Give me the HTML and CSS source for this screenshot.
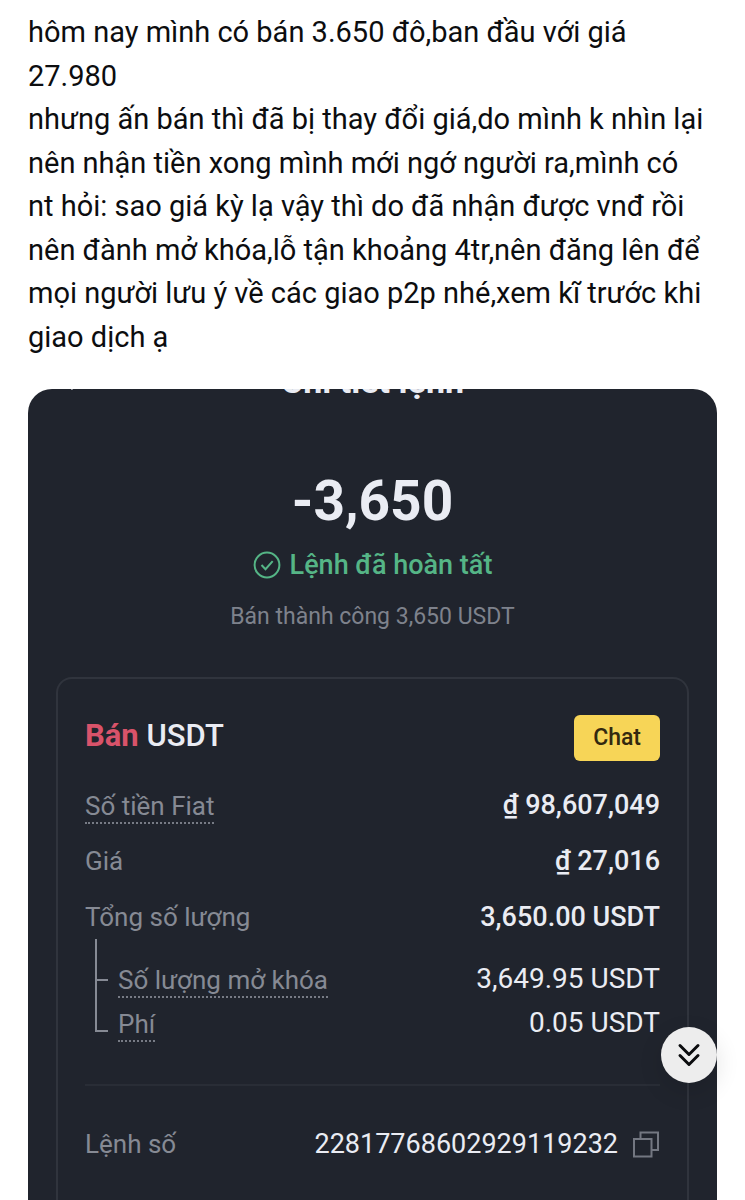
FILE: index.html
```html
<!DOCTYPE html>
<html lang="vi">
<head>
<meta charset="utf-8">
<meta name="viewport" content="width=device-width, initial-scale=1">
<title>Chi tiết lệnh</title>
<link rel="stylesheet" href="styles.css">
</head>
<body>
<main class="page">
  <p class="post">hôm nay mình có bán 3.650 đô,ban đầu với giá<br>27.980<br>nhưng ấn bán thì đã bị thay đổi giá,do mình k nhìn lại<br>nên nhận tiền xong mình mới ngớ người ra,mình có<br>nt hỏi: sao giá kỳ lạ vậy thì do đã nhận được vnđ rồi<br>nên đành mở khóa,lỗ tận khoảng 4tr,nên đăng lên để<br>mọi người lưu ý về các giao p2p nhé,xem kĩ trước khi<br>giao dịch ạ</p>

  <article class="order">
    <header class="order-head">
      <svg class="back-icon" viewBox="0 0 16 28" aria-hidden="true"><path d="M13 4 4 13l9 9"/></svg>
      <h1 class="order-title">Chi tiết lệnh</h1>
    </header>

    <section class="summary">
      <p class="amount">-3,650</p>
      <p class="status">
        <svg class="status-icon" viewBox="0 0 28 28" aria-hidden="true"><circle cx="14" cy="14" r="12.4"/><path d="m8.5 14 4 4.2 7.2-8"/></svg>
        <span>Lệnh đã hoàn tất</span>
      </p>
      <p class="note">Bán thành công 3,650 USDT</p>
    </section>

    <section class="panel">
      <div class="panel-head">
        <h2 class="panel-title"><span class="side">Bán</span> USDT</h2>
        <button class="chat" type="button">Chat</button>
      </div>
      <dl class="rows">
        <div class="row"><dt><span class="hint">Số tiền Fiat</span></dt><dd class="strong">₫ 98,607,049</dd></div>
        <div class="row"><dt>Giá</dt><dd class="strong">₫ 27,016</dd></div>
        <div class="row"><dt>Tổng số lượng</dt><dd class="strong">3,650.00 USDT</dd></div>
      </dl>
      <div class="breakdown">
        <svg class="branch" viewBox="0 0 16 96" aria-hidden="true"><path d="M3 0v92h12M3 41h12"/></svg>
        <dl class="subrows">
          <div class="row"><dt><span class="hint">Số lượng mở khóa</span></dt><dd>3,649.95 USDT</dd></div>
          <div class="row"><dt><span class="hint">Phí</span></dt><dd>0.05 USDT</dd></div>
        </dl>
      </div>
      <dl class="reference">
        <div class="row">
          <dt>Lệnh số</dt>
          <dd class="number">22817768602929119232
            <button class="copy" type="button" aria-label="Sao chép">
              <svg viewBox="0 0 28 28" aria-hidden="true"><path d="M2 9h17.500v17.500H2z"/><path d="M8.500 9V2.500H26V20h-6.500"/></svg>
            </button>
          </dd>
        </div>
      </dl>
    </section>
  </article>
</main>
<button class="jump" type="button" aria-label="Xuống cuối">
  <svg viewBox="0 0 24 24" aria-hidden="true"><path d="m3 2.500 9 9 9-9M3 12.500l9 9 9-9"/></svg>
</button>
</body>
</html>
```
FILE: styles.css
```css
* {
  box-sizing: border-box;
}

body,
h1,
h2,
p,
dl,
dd {
  margin: 0;
}

body {
  background: #fff;
  color: #0c0d0f;
  font-family: Roboto, "Noto Sans", sans-serif;
}

button {
  border: 0;
  padding: 0;
  font: inherit;
  cursor: pointer;
}

svg {
  display: block;
  fill: none;
  stroke: currentColor;
}

.page {
  display: flex;
  flex-direction: column;
  height: 100vh;
  padding: 11px 28px 0;
  overflow: hidden;
}

.post {
  margin-bottom: 30px;
  font-size: 29px;
  line-height: 1.5;
  white-space: nowrap;
}

.order {
  display: flex;
  flex: 1;
  flex-direction: column;
  padding: 0 28px;
  overflow: hidden;
  border-radius: 24px 24px 0 0;
  background: #20242d;
  color: #eaecf3;
}

.order-head {
  display: grid;
  grid-template-columns: 16px 1fr 16px;
  align-items: center;
  margin-top: -30px;
  padding: 0 4px;
}

.back-icon {
  width: 16px;
  stroke-width: 3;
}

.order-title {
  font-size: 34px;
  font-weight: 700;
  line-height: 44px;
  text-align: center;
}

.summary {
  display: flex;
  flex-direction: column;
  align-items: center;
  padding: 68px 0 44px;
}

.amount {
  font-size: 55px;
  font-weight: 700;
  line-height: 60px;
}

.status {
  display: flex;
  align-items: center;
  gap: 9px;
  margin-top: 14px;
  color: #55b586;
  font-size: 27px;
  font-weight: 500;
  line-height: 40px;
}

.status-icon {
  width: 28px;
  stroke-width: 2;
}

.note {
  margin-top: 16px;
  color: #7e828c;
  font-size: 23px;
  line-height: 32px;
}

.panel {
  flex: 1;
  padding: 36px 27px 0;
  border: 2px solid #30343d;
  border-bottom: 0;
  border-radius: 16px 16px 0 0;
  font-size: 27px;
  line-height: 32px;
}

.panel-head,
.row {
  display: flex;
  align-items: center;
  justify-content: space-between;
}

.panel-head {
  align-items: flex-start;
}

.panel-title {
  font-size: 31px;
  font-weight: 500;
  line-height: 42px;
}

.side {
  color: #d9536a;
  font-weight: 700;
}

.chat {
  padding: 0 19px;
  border-radius: 6px;
  background: #f7d557;
  color: #33290f;
  font-size: 23px;
  font-weight: 500;
  line-height: 46px;
}

.rows {
  display: flex;
  flex-direction: column;
  gap: 24px;
  margin-top: 28px;
}

dt {
  color: #868a94;
  font-size: 26px;
}

.hint {
  display: block;
  margin-bottom: -4px;
  border-bottom: 2px dotted #777b85;
  line-height: 32px;
}

.row {
  height: 32px;
}

.strong {
  font-weight: 500;
}

.breakdown {
  display: flex;
  gap: 9px;
  margin-top: 2px;
  padding: 0 0 45px 8px;
  border-bottom: 2px solid #292d36;
}

.branch {
  width: 16px;
  color: #868a94;
  stroke-width: 2;
}

.subrows {
  display: flex;
  flex: 1;
  flex-direction: column;
  gap: 12px;
  padding-top: 28px;
  font-size: 28px;
}

.reference {
  margin-top: 42px;
}

.number {
  display: flex;
  align-items: center;
  gap: 14px;
}

.copy {
  background: none;
  color: #737781;
}

.copy svg {
  width: 28px;
  stroke-width: 2;
}

.jump {
  display: grid;
  position: fixed;
  right: 28px;
  bottom: 117px;
  width: 56px;
  height: 56px;
  place-items: center;
  border-radius: 50%;
  background: #ededed;
  box-shadow: 0 8px 24px rgb(0 0 0 / 12%);
  color: #0c0d0f;
}

.jump svg {
  width: 24px;
  stroke-linecap: round;
  stroke-linejoin: round;
  stroke-width: 3;
}
```
